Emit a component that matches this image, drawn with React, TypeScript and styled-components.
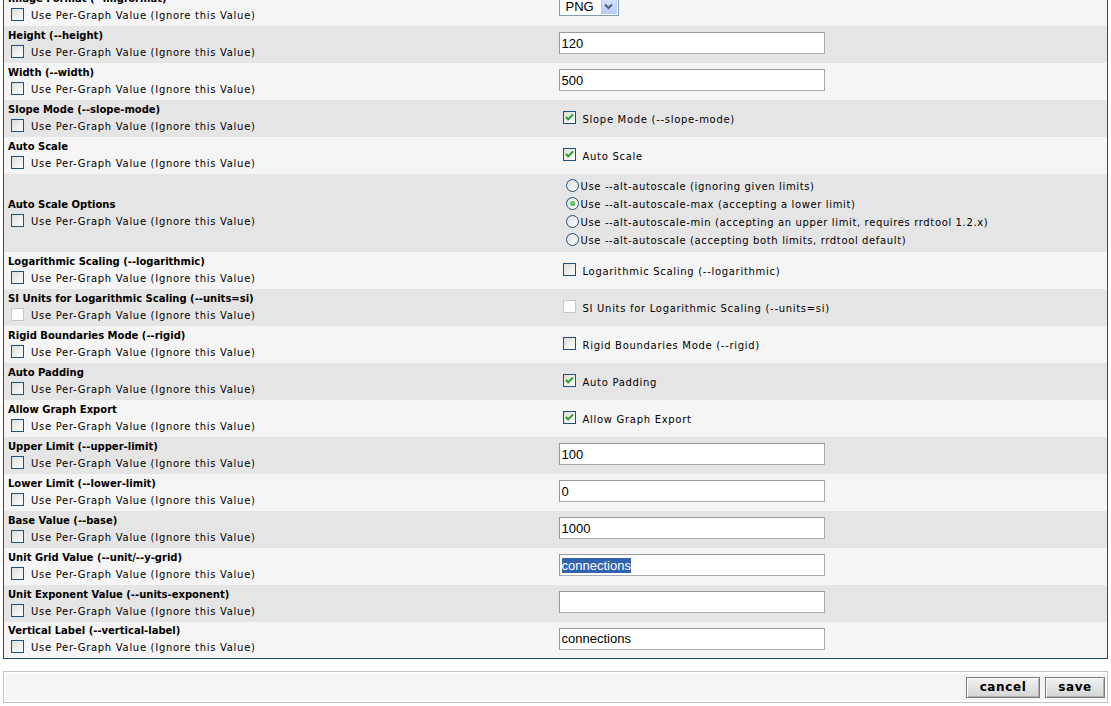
import React, { FC } from 'react';
import styled, { createGlobalStyle } from 'styled-components';

const GlobalStyle = createGlobalStyle`
  html, body {
    margin: 0;
    padding: 0;
    background: #ffffff;
    overflow: hidden;
  }
  body {
    font-family: "DejaVu Sans", Verdana, sans-serif;
    color: #000;
  }
`;

const Page = styled.div`
  margin-top: -12px;
  padding: 0 3px;
`;

const FormTable = styled.table`
  width: 100%;
  border-collapse: collapse;
  border: 1px solid #1c4f80;
  table-layout: fixed;
`;

const Row = styled.tr<{ $dark?: boolean }>`
  height: 37px;
  background: ${(p) => (p.$dark ? '#e5e5e5' : '#f5f5f5')};
`;

const Cell = styled.td<{ $tall?: boolean }>`
  width: 50%;
  padding: ${(p) => (p.$tall ? '3px 4px 3px' : '2px 4px 4px')};
  vertical-align: middle;
`;

const Title = styled.div`
  font-size: 10px;
  font-weight: bold;
  line-height: 13px;
  white-space: nowrap;
`;

const CheckLine = styled.div`
  display: flex;
  align-items: flex-end;
  margin-top: 3px;
  padding-left: 3px;
  height: 13px;
`;

const CheckText = styled.span`
  font-size: 10px;
  line-height: 10px;
  letter-spacing: 0.7px;
  margin-left: 7px;
  white-space: nowrap;
`;

const Box = styled.span<{ $disabled?: boolean }>`
  display: inline-flex;
  align-items: center;
  justify-content: center;
  box-sizing: border-box;
  width: 13px;
  height: 13px;
  flex: none;
  border: 1px solid ${(p) => (p.$disabled ? '#cac8bb' : '#1c5180')};
  background: ${(p) =>
    p.$disabled ? '#ffffff' : 'linear-gradient(135deg, #dcdcd7 0%, #f5f5f2 70%, #ffffff 100%)'};
`;

const ValueCheck = styled.div`
  display: flex;
  align-items: center;
  padding-left: 3px;
  height: 18px;
`;

const ValueText = styled.span`
  font-size: 10px;
  letter-spacing: 0.7px;
  margin-left: 7px;
  padding-top: 5px;
  white-space: nowrap;
`;

const TextField = styled.input`
  display: block;
  box-sizing: border-box;
  width: 266px;
  height: 22px;
  margin: 0 0 0 -1px;
  padding: 1px 2px;
  border: 1px solid #a5acb2;
  border-top-color: #999;
  border-left-color: #999;
  background: #fff;
  font-family: "Liberation Sans", Arial, sans-serif;
  font-size: 13px;
  color: #000;
  outline: none;
`;

const FakeField = styled.div`
  box-sizing: border-box;
  width: 266px;
  height: 22px;
  margin-left: -1px;
  padding: 3px 2px 0;
  border: 1px solid #999;
  border-right-color: #a5acb2;
  border-bottom-color: #a5acb2;
  background: #fff;
  font-family: "Liberation Sans", Arial, sans-serif;
  font-size: 13px;
  line-height: 15px;
`;

const Highlight = styled.span`
  background: #3163ae;
  color: #fff;
`;

const Select = styled.div`
  display: flex;
  align-items: center;
  box-sizing: border-box;
  width: 60px;
  height: 20px;
  margin: 0 0 0 -1px;
  border: 1px solid #7f9db9;
  background: #fff;
  font-family: "Liberation Sans", Arial, sans-serif;
  font-size: 13px;
`;

const SelectValue = styled.span`
  flex: 1;
  padding-left: 6px;
`;

const SelectButton = styled.span`
  display: flex;
  align-items: center;
  justify-content: center;
  width: 16px;
  height: 16px;
  margin-right: 1px;
  border: 1px solid #b8cbf0;
  box-sizing: border-box;
  background: linear-gradient(#d9e4fb, #b6cbf5);
`;

const RadioLine = styled.div`
  display: flex;
  align-items: center;
  height: 18px;
  padding-left: 6px;
`;

const RadioDot = styled.span<{ $on?: boolean }>`
  position: relative;
  box-sizing: border-box;
  width: 13px;
  height: 13px;
  border-radius: 50%;
  border: 1px solid #1c5180;
  background: linear-gradient(135deg, #dcdcd7, #ffffff);
  flex: none;
  &::after {
    content: '';
    display: ${(p) => (p.$on ? 'block' : 'none')};
    position: absolute;
    left: 3px;
    top: 3px;
    width: 5px;
    height: 5px;
    border-radius: 50%;
    background: radial-gradient(circle at 40% 40%, #7ee07e, #21a121);
  }
`;

const RadioText = styled.span`
  font-size: 10px;
  letter-spacing: 0.63px;
  margin-left: 2px;
  padding-top: 2px;
  white-space: nowrap;
`;

const Footer = styled.div`
  margin-top: 12px;
  border: 1px solid #c2c2c2;
  padding: 2px;
  background: #fff;
`;

const FooterInner = styled.div`
  display: flex;
  justify-content: flex-end;
  align-items: center;
  gap: 5px;
  height: 26px;
  background: #f4f4f4;
`;

const Button = styled.button<{ $w: number }>`
  box-sizing: border-box;
  width: ${(p) => p.$w}px;
  height: 21px;
  padding: 0;
  border: 1px solid #7a7a7a;
  box-shadow: inset 1px 1px 0 #ffffff, inset -1px -1px 0 #b0b0b0;
  background: linear-gradient(#f2f2f2, #d4d4d4);
  font-family: "DejaVu Sans", Verdana, sans-serif;
  font-weight: bold;
  font-size: 12px;
  color: #000;
  letter-spacing: 0.6px;
`;

const Tick: FC = () => (
  <svg width="11" height="11" viewBox="0 0 11 11">
    <path d="M2 5 L4.2 7.4 L9 2.4" fill="none" stroke="#21a121" strokeWidth="2" />
  </svg>
);

const Check: FC<{ on?: boolean; disabled?: boolean }> = ({ on, disabled }) => (
  <Box $disabled={disabled}>{on && <Tick />}</Box>
);

const Arrow: FC = () => (
  <svg width="9" height="7" viewBox="0 0 9 7">
    <path d="M1 1.5 L4.5 5 L8 1.5" fill="none" stroke="#4d6185" strokeWidth="2" />
  </svg>
);

type Field =
  | { kind: 'select'; value: string }
  | { kind: 'text'; value: string; selected?: boolean }
  | { kind: 'check'; text: string; on?: boolean; disabled?: boolean }
  | { kind: 'radio'; options: string[]; active: number };

interface Item {
  title: string;
  disabled?: boolean;
  field: Field;
}

const items: Item[] = [
  { title: 'Image Format (--imgformat)', field: { kind: 'select', value: 'PNG' } },
  { title: 'Height (--height)', field: { kind: 'text', value: '120' } },
  { title: 'Width (--width)', field: { kind: 'text', value: '500' } },
  { title: 'Slope Mode (--slope-mode)', field: { kind: 'check', text: 'Slope Mode (--slope-mode)', on: true } },
  { title: 'Auto Scale', field: { kind: 'check', text: 'Auto Scale', on: true } },
  {
    title: 'Auto Scale Options',
    field: {
      kind: 'radio',
      active: 1,
      options: [
        'Use --alt-autoscale (ignoring given limits)',
        'Use --alt-autoscale-max (accepting a lower limit)',
        'Use --alt-autoscale-min (accepting an upper limit, requires rrdtool 1.2.x)',
        'Use --alt-autoscale (accepting both limits, rrdtool default)',
      ],
    },
  },
  { title: 'Logarithmic Scaling (--logarithmic)', field: { kind: 'check', text: 'Logarithmic Scaling (--logarithmic)' } },
  {
    title: 'SI Units for Logarithmic Scaling (--units=si)',
    disabled: true,
    field: { kind: 'check', text: 'SI Units for Logarithmic Scaling (--units=si)', disabled: true },
  },
  { title: 'Rigid Boundaries Mode (--rigid)', field: { kind: 'check', text: 'Rigid Boundaries Mode (--rigid)' } },
  { title: 'Auto Padding', field: { kind: 'check', text: 'Auto Padding', on: true } },
  { title: 'Allow Graph Export', field: { kind: 'check', text: 'Allow Graph Export', on: true } },
  { title: 'Upper Limit (--upper-limit)', field: { kind: 'text', value: '100' } },
  { title: 'Lower Limit (--lower-limit)', field: { kind: 'text', value: '0' } },
  { title: 'Base Value (--base)', field: { kind: 'text', value: '1000' } },
  { title: 'Unit Grid Value (--unit/--y-grid)', field: { kind: 'text', value: 'connections', selected: true } },
  { title: 'Unit Exponent Value (--units-exponent)', field: { kind: 'text', value: '' } },
  { title: 'Vertical Label (--vertical-label)', field: { kind: 'text', value: 'connections' } },
];

const FieldView: FC<{ field: Field }> = ({ field }) => {
  switch (field.kind) {
    case 'select':
      return (
        <Select>
          <SelectValue>{field.value}</SelectValue>
          <SelectButton>
            <Arrow />
          </SelectButton>
        </Select>
      );
    case 'text':
      return field.selected ? (
        <FakeField role="textbox">
          <Highlight>{field.value}</Highlight>
        </FakeField>
      ) : (
        <TextField readOnly defaultValue={field.value} />
      );
    case 'check':
      return (
        <ValueCheck>
          <Check on={field.on} disabled={field.disabled} />
          <ValueText>{field.text}</ValueText>
        </ValueCheck>
      );
    case 'radio':
      return (
        <div>
          {field.options.map((o, i) => (
            <RadioLine key={o}>
              <RadioDot $on={i === field.active} />
              <RadioText>{o}</RadioText>
            </RadioLine>
          ))}
        </div>
      );
  }
};

export const App: FC = () => {
  return (
    <Page>
      <GlobalStyle />
      <FormTable>
        <tbody>
          {items.map((item, i) => {
            const tall = item.field.kind === 'radio';
            return (
              <Row key={item.title} $dark={i % 2 === 1}>
                <Cell $tall={tall}>
                  <Title>{item.title}</Title>
                  <CheckLine>
                    <Check disabled={item.disabled} />
                    <CheckText>Use Per-Graph Value (Ignore this Value)</CheckText>
                  </CheckLine>
                </Cell>
                <Cell $tall={tall}>
                  <FieldView field={item.field} />
                </Cell>
              </Row>
            );
          })}
        </tbody>
      </FormTable>
      <Footer>
        <FooterInner>
          <Button $w={74}>cancel</Button>
          <Button $w={60}>save</Button>
        </FooterInner>
      </Footer>
    </Page>
  );
};

export default App;
